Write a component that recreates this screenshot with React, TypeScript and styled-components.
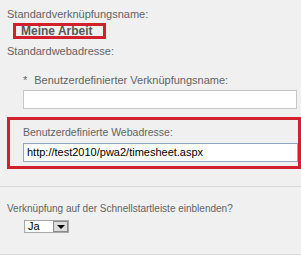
import React from 'react'
import styled, { createGlobalStyle } from 'styled-components'

const GlobalStyle = createGlobalStyle`
  html, body {
    margin: 0;
    padding: 0;
    background: #f0f0f0;
  }
  body {
    font-family: "Liberation Sans", Arial, sans-serif;
  }
`

const Colors = {
  page: '#f0f0f0',
  label: '#636363',
  value: '#585858',
  red: '#d2202f',
  rule: '#d9d9d9',
  inputBorder: '#c6c6c6',
  activeBorder: '#8fa8bf',
}

const Page = styled.div`
  width: 301px;
  height: 255px;
  background: ${Colors.page};
  overflow: hidden;
`

const Label = styled.div<{ $indent?: number; $top?: number; $size?: number }>`
  font-size: ${p => p.$size ?? 11}px;
  line-height: 15px;
  color: ${Colors.label};
  white-space: nowrap;
  padding-left: ${p => p.$indent ?? 7}px;
  margin-top: ${p => p.$top ?? 0}px;
`

const Star = styled.span`
  margin-right: 7px;
`

const NameMark = styled.div`
  margin: 1px 0 0 13px;
  width: 93px;
  height: 16px;
  box-sizing: border-box;
  border: 3px solid ${Colors.red};
  padding-left: 5px;
  font-size: 12px;
  font-weight: 700;
  line-height: 11px;
  color: ${Colors.value};
  white-space: nowrap;
`

const TextBox = styled.div<{ $active?: boolean; $top?: number }>`
  box-sizing: border-box;
  height: 19px;
  margin-top: ${p => p.$top ?? 0}px;
  margin-left: ${p => (p.$active ? 0 : 23)}px;
  width: ${p => (p.$active ? 275 : 274)}px;
  border: 1px solid ${p => (p.$active ? Colors.activeBorder : Colors.inputBorder)};
  background: #fff;
  padding-left: 3px;
  font-size: 11px;
  line-height: 17px;
  color: #000;
  white-space: nowrap;
`

const Callout = styled.div`
  margin: 8px 0 0 7px;
  height: 52px;
  box-sizing: border-box;
  border: 3px solid ${Colors.red};
  padding: 5px 0 0 13px;
`

const CalloutLabel = styled(Label)`
  padding-left: 0;
  margin-bottom: 3px;
`

const Rule = styled.div<{ $top: number }>`
  margin-top: ${p => p.$top}px;
  border-top: 1px solid ${Colors.rule};
`

const Dropdown = styled.div`
  margin: 4px 0 0 24px;
  width: 45px;
  height: 13px;
  box-sizing: border-box;
  display: flex;
  border: 1px solid #a7a7a7;
  background: #fff;
`

const DropdownValue = styled.span`
  flex: 1;
  padding-left: 3px;
  font-size: 11px;
  line-height: 11px;
  color: #000;
`

const DropdownButton = styled.span`
  width: 15px;
  box-sizing: border-box;
  border: 1px solid #8a8a8a;
  background: #dcdcdc;
  display: flex;
  align-items: center;
  justify-content: center;

  &::after {
    content: '';
    border-left: 4px solid transparent;
    border-right: 4px solid transparent;
    border-top: 4px solid #000;
  }
`

export default function App() {
  return (
    <Page>
      <GlobalStyle />
      <Label $top={7}>Standardverknüpfungsname:</Label>
      <NameMark>Meine Arbeit</NameMark>
      <Label $top={5}>Standardwebadresse:</Label>

      <Label $indent={23} $top={14}>
        <Star>*</Star>Benutzerdefinierter Verknüpfungsname:
      </Label>
      <TextBox $top={2} />

      <Callout>
        <CalloutLabel $size={10.5}>Benutzerdefinierte Webadresse:</CalloutLabel>
        <TextBox $active>http://test2010/pwa2/timesheet.aspx</TextBox>
      </Callout>

      <Rule $top={17} />
      <Label $top={14} $size={10}>
        Verknüpfung auf der Schnellstartleiste einblenden?
      </Label>
      <Dropdown>
        <DropdownValue>Ja</DropdownValue>
        <DropdownButton />
      </Dropdown>
      <Rule $top={21} />
    </Page>
  )
}
